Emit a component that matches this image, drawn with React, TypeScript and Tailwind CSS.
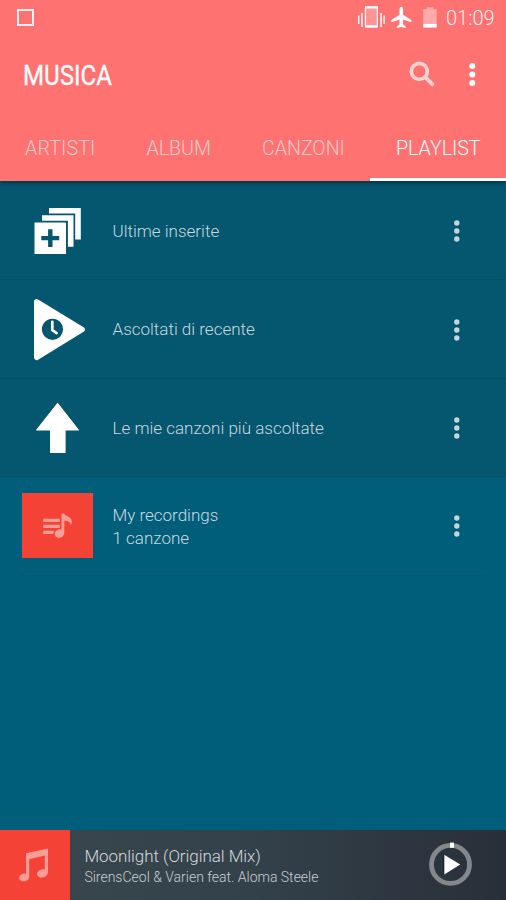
import type { ReactNode } from 'react'

interface Playlist {
  title: string
  subtitle?: string
  icon: ReactNode
  custom?: boolean
}

function RecentlyAddedIcon() {
  return (
    <svg viewBox="22 195 71 72" className="w-[71px] h-[72px]" fill="#fff">
      <path d="M49 208h31.8v31.6h-5.6v-26H49z" />
      <path d="M42 215.2h31.5v31.5h-5.6v-26H42z" />
      <rect x="34.5" y="222.4" width="31.5" height="31.5" rx="0.5" />
      <path d="M48.1 229.3h4.4v6.6h6.7v4.3h-6.7v6.8h-4.4v-6.8h-6.8v-4.3h6.8z" fill="#05566f" />
    </svg>
  )
}

function RecentlyPlayedIcon() {
  return (
    <svg viewBox="22 294 71 72" className="w-[71px] h-[72px]">
      <path d="M36.7 301.8L82.2 329.5L36.7 357.4z" fill="#fff" stroke="#fff" strokeWidth="5.4" strokeLinejoin="round" />
      <circle cx="52.5" cy="329.3" r="10.6" fill="#05566f" />
      <path d="M52.3 321.8v8.3l4.3 3" fill="none" stroke="#fff" strokeWidth="2.7" strokeLinecap="round" />
    </svg>
  )
}

function TopTracksIcon() {
  return (
    <svg viewBox="22 392 71 72" className="w-[71px] h-[72px]" fill="#fff">
      <path d="M57.6 403.5L78.4 430h-13.4v22.4H50.6V430H36.7z" stroke="#fff" strokeWidth="1.2" strokeLinejoin="round" />
    </svg>
  )
}

function RecordingsIcon() {
  return (
    <div className="w-[71px] h-[65px] bg-[#f44336]">
      <svg viewBox="22 493.2 71 65" className="w-[71px] h-[65px]" fill="#fa9d96">
        <path d="M43.2 519h16.7v3.1H43.2zM43.2 525h16.7v3.1H43.2zM43.2 531h11.1l-1.2 3.1h-9.9z" />
        <ellipse cx="59.4" cy="533.8" rx="4.8" ry="4.2" transform="rotate(-20 59.4 533.8)" />
        <path d="M61.5 513.8h2.8c.5 2.6 7.5 3.2 7.5 7.7 0 1.4-.3 2.6-1 3.9.1-3.5-3.2-4.3-6.5-4.4v12.8h-2.8z" />
      </svg>
    </div>
  )
}

const playlists: Playlist[] = [
  { title: 'Ultime inserite', icon: <RecentlyAddedIcon /> },
  { title: 'Ascoltati di recente', icon: <RecentlyPlayedIcon /> },
  { title: 'Le mie canzoni più ascoltate', icon: <TopTracksIcon /> },
  { title: 'My recordings', subtitle: '1 canzone', icon: <RecordingsIcon />, custom: true },
]

function StatusBar() {
  return (
    <div className="h-[37px] flex items-start justify-between pl-[17px] pr-[11px]">
      <div className="w-[17px] h-[17px] mt-[9px] border-2 border-white/90" />
      <div className="flex">
        <svg viewBox="356 0 84 37" className="w-[84px] h-[37px]" fill="#fff">
          <rect x="365.4" y="7" width="12" height="19.8" fill="#ff9696" stroke="#fff" strokeWidth="1.2" rx="1" />
          <path d="M365 6.2h13v2.3h-13zM365 25.3h13v2.3h-13z" />
          <path d="M358 15.5h1.4v8.5H358zM361.2 13h1.5v14h-1.5zM380.3 13h1.5v14h-1.5zM383.4 15.5h1.4v8.5h-1.4z" />
          <path d="M401.3 6.8c1.1 0 1.8 1 1.8 2.3v5.7l8.2 5.2v2.2l-8.2-2.7v5l2.6 2v1.6l-4.4-1.2-4.4 1.2v-1.6l2.6-2v-5l-8.2 2.7V20l8.2-5.2V9.1c0-1.3.7-2.3 1.8-2.3z" />
          <path d="M427 7.2h6.2v1.7h3.5v14.9h-13.5V8.9h3.8z" fill="#ffaaaa" />
          <rect x="423.2" y="23.8" width="13.5" height="3.8" />
        </svg>
        <span className="w-[49px] ml-[6.5px] mt-[4.4px] text-[20px] leading-7 font-light whitespace-nowrap text-white/95">01:09</span>
      </div>
    </div>
  )
}

function Header() {
  return (
    <header className="relative z-10 h-[181px] flex flex-col bg-[#ff7272] shadow-[0_1px_5px_rgba(0,0,0,0.6)]">
      <StatusBar />
      <div className="h-[76px] flex items-center justify-between pl-[23px] pr-[26px]">
        <h1 className="pt-[2px] text-[28px] leading-8 [-webkit-text-stroke:0.3px_white] origin-left scale-x-[0.86] text-white">MUSICA</h1>
        <svg viewBox="406 56 74 40" className="w-[74px] h-[40px]" fill="none">
          <circle cx="419.3" cy="72.4" r="8" stroke="#ffd3d3" strokeWidth="3.7" />
          <path d="M425.2 78.2l7 7" stroke="#ffd3d3" strokeWidth="4" strokeLinecap="round" />
          <circle cx="472.3" cy="67" r="3" fill="#fff" />
          <circle cx="472.3" cy="75.5" r="3" fill="#fff" />
          <circle cx="472.3" cy="84" r="3" fill="#fff" />
        </svg>
      </div>
      <nav className="h-[68px] flex text-[19.6px] leading-[58px] font-light text-[#ffcaca] whitespace-nowrap">
        <span className="w-[121px] pt-[7px] pl-[25px] tracking-[0.15px]">ARTISTI</span>
        <span className="w-[115px] pt-[7px] pl-[25.5px]">ALBUM</span>
        <span className="w-[134px] pt-[7px] pl-[26px]">CANZONI</span>
        <span className="w-[136px] pt-[7px] pl-[26px] border-b-3 border-white text-white">PLAYLIST</span>
      </nav>
    </header>
  )
}

function PlaylistRow({ title, subtitle, icon, custom }: Playlist) {
  return (
    <li className={custom ? 'relative h-[98.4px] pb-[1px] flex items-center pl-[22px] pr-[43px]' : 'h-[98.4px] pt-[1px] flex items-center pl-[22px] pr-[43px] bg-[#05566f] border-b border-[#064c62]'}>
      {icon}
      <div className={custom ? 'flex-1 pt-[2px] pl-[19.5px] text-[17px] leading-[22.5px] font-light text-[#c8d9df]' : 'flex-1 pl-[19.5px] text-[17px] leading-[22.5px] font-light text-[#c8d9df]'}>
        <p>{title}</p>
        {subtitle && <p>{subtitle}</p>}
      </div>
      <svg viewBox="0 0 13 24" className="w-[13px] h-[24px]" fill="#c3d6dc">
        <circle cx="6.8" cy="4" r="2.7" />
        <circle cx="6.8" cy="12" r="2.7" />
        <circle cx="6.8" cy="20" r="2.7" />
      </svg>
      {custom && <div className="absolute left-5 right-5 bottom-0 h-px bg-[#05566f]" />}
    </li>
  )
}

function NowPlaying() {
  return (
    <footer className="h-[70px] flex items-center bg-linear-to-r from-[#39474f] via-[#33414a] to-[#292f39]">
      <div className="w-[70.4px] h-[70px] bg-[#f44336]">
        <svg viewBox="0 830 70 70" className="w-[70px] h-[70px]" fill="#fa9d96">
          <path d="M26 853.2L48 848.4V872.5h-3.2V855.6L29.2 859.2V877H26z" />
          <ellipse cx="24.2" cy="877.4" rx="5.1" ry="3.9" transform="rotate(-12 24.2 877.4)" />
          <ellipse cx="42.4" cy="873.4" rx="5.5" ry="4" transform="rotate(-12 42.4 873.4)" />
        </svg>
      </div>
      <div className="flex-1 pt-px pl-[14px] font-light whitespace-nowrap">
        <p className="text-[17px] leading-[22px] tracking-[-0.05px] text-[#d5d9db]">Moonlight (Original Mix)</p>
        <p className="text-[14px] leading-[20px] text-[#c9ced1]">SirensCeol &amp; Varien feat. Aloma Steele</p>
      </div>
      <svg viewBox="426 830 80 70" className="w-[80px] h-[70px]" fill="none">
        <circle cx="450.5" cy="864.4" r="19" stroke="#84888b" strokeWidth="4.8" />
        <path d="M450 845.2h4" stroke="#fff" strokeWidth="5.2" />
        <path d="M443.5 854.2l16 10.2-16 10.2z" fill="#11151b" />
        <path d="M444.3 854.8l15.9 9.8-15.9 9.8z" fill="#fff" />
      </svg>
    </footer>
  )
}

export default function App() {
  return (
    <div className="w-[506px] h-[900px] flex flex-col overflow-hidden bg-[#005e7b] font-['Roboto',sans-serif]">
      <Header />
      <ul className="flex-1 pt-px">
        {playlists.map((playlist) => (
          <PlaylistRow key={playlist.title} {...playlist} />
        ))}
      </ul>
      <NowPlaying />
    </div>
  )
}
